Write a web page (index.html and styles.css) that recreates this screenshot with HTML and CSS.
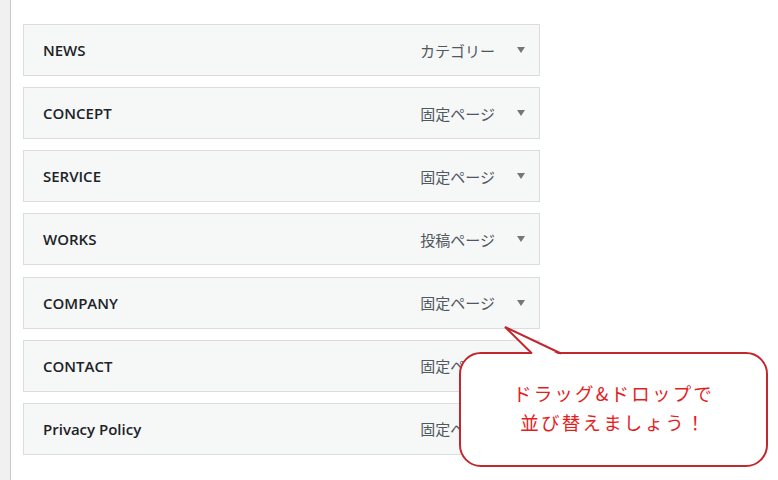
FILE: index.html
```html
<!DOCTYPE html>
<html lang="ja">
<head>
<meta charset="utf-8">
<link rel="stylesheet" href="styles.css">
</head>
<body>
<div class="page">
  <div class="side"></div>
  <div class="main">
    <ul class="menu">
      <li class="item"><span class="title">NEWS</span><span class="meta"><span class="type">カテゴリー</span><span class="arrow"></span></span></li>
      <li class="item"><span class="title">CONCEPT</span><span class="meta"><span class="type">固定ページ</span><span class="arrow"></span></span></li>
      <li class="item"><span class="title">SERVICE</span><span class="meta"><span class="type">固定ページ</span><span class="arrow"></span></span></li>
      <li class="item"><span class="title">WORKS</span><span class="meta"><span class="type">投稿ページ</span><span class="arrow"></span></span></li>
      <li class="item"><span class="title">COMPANY</span><span class="meta"><span class="type">固定ページ</span><span class="arrow"></span></span></li>
      <li class="item"><span class="title">CONTACT</span><span class="meta"><span class="type">固定ページ</span><span class="arrow"></span></span></li>
      <li class="item"><span class="title">Privacy Policy</span><span class="meta"><span class="type">固定ページ</span><span class="arrow"></span></span></li>
    </ul>
  </div>
</div>
<div class="callout">
  <div class="bubble">
    <p class="line">ドラッグ&amp;ドロップで</p>
    <p class="line">並び替えましょう！</p>
  </div>
  <svg class="tail" width="310" height="40" viewBox="0 0 310 40">
    <polygon points="46,7 74,35 101,35" fill="#fff"/>
    <polyline points="73,33.5 46,7 102,33.5" fill="none" stroke="#c1272d" stroke-width="2" stroke-linejoin="miter"/>
  </svg>
</div>
</body>
</html>
```
FILE: styles.css
```css
html, body {
  margin: 0;
  padding: 0;
  background: #fff;
  height: 100%;
}
body {
  font-family: "Open Sans", "Noto Sans CJK JP", sans-serif;
  overflow: hidden;
}
.page {
  display: flex;
  min-height: 480px;
}
.side {
  width: 10px;
  background: #f0f0f1;
  border-right: 1px solid #c8c9cc;
  flex: none;
}
.main {
  padding: 24px 0 0 12px;
}
.menu {
  list-style: none;
  margin: 0;
  padding: 0;
  display: flex;
  flex-direction: column;
  gap: 11.17px;
}
.item {
  box-sizing: border-box;
  width: 517px;
  height: 52px;
  background: #f6f7f7;
  border: 1px solid #dcdcde;
  display: flex;
  align-items: center;
  justify-content: space-between;
  padding: 0 14px 0 19px;
}
.title {
  font-family: "Open Sans", "Noto Sans", sans-serif;
  font-weight: 600;
  font-size: 15px;
  color: #1d2327;
}
.meta {
  display: flex;
  align-items: center;
}
.type {
  font-family: "Noto Sans CJK JP", sans-serif;
  font-size: 15px;
  color: #50575e;
}
.arrow {
  width: 0;
  height: 0;
  margin-left: 22px;
  border-left: 4.5px solid transparent;
  border-right: 4.5px solid transparent;
  border-top: 6.5px solid #72777c;
}
.callout {
  position: absolute;
  left: 459px;
  top: 320px;
  width: 310px;
  height: 148px;
}
.bubble {
  position: absolute;
  left: 0;
  top: 32px;
  box-sizing: border-box;
  width: 309px;
  height: 115px;
  background: #fff;
  border: 2px solid #c1272d;
  border-radius: 22px;
  padding-top: 25px;
  text-align: center;
}
.line {
  margin: 0;
  font-family: "Noto Sans CJK JP", sans-serif;
  font-size: 18.5px;
  line-height: 29px;
  letter-spacing: 2.2px;
  color: #e31e1e;
}
.tail {
  position: absolute;
  left: 0;
  top: 0;
}
```
